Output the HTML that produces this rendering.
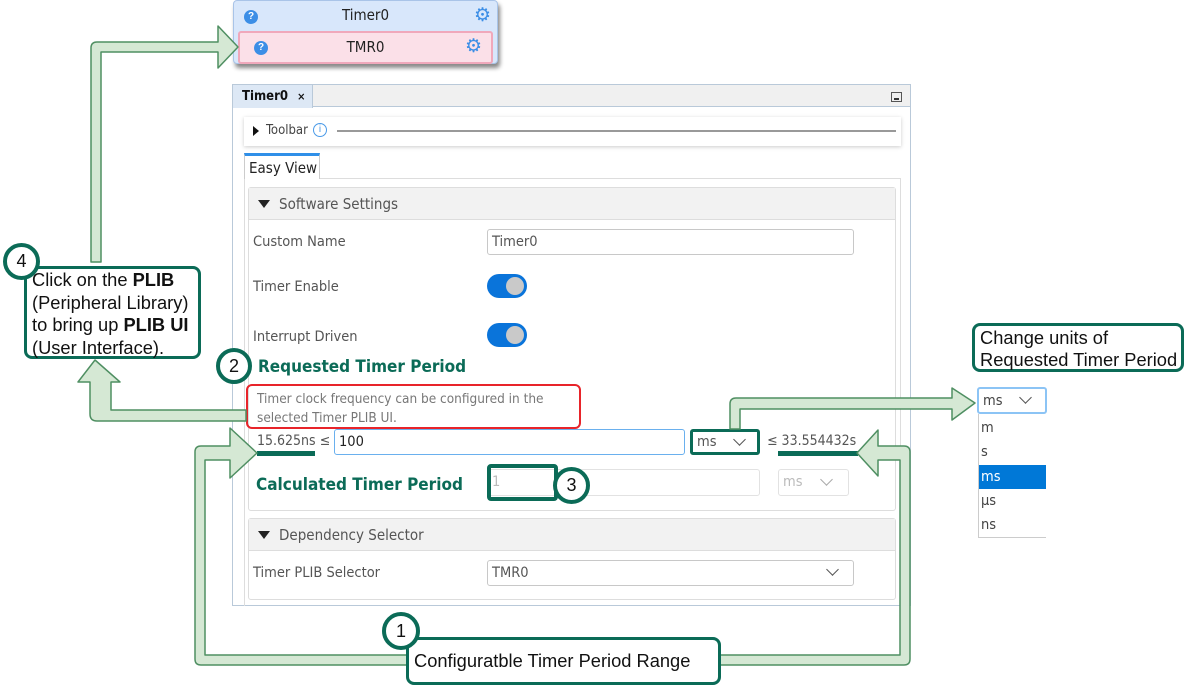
<!DOCTYPE html>
<html><head><meta charset="utf-8"><style>
*{box-sizing:border-box;margin:0;padding:0}
body{width:1184px;height:685px;background:#fff;position:relative;overflow:hidden;font-family:"Liberation Sans",sans-serif;color:#333}
.a{position:absolute}
.ui{font-family:"DejaVu Sans Condensed","Liberation Sans",sans-serif;font-size:14.5px;color:#555}
.inp{position:absolute;border:1px solid #c8c8c8;border-radius:3px;background:#fff;font-size:14.5px;padding-left:4px;line-height:24px;color:#555;font-family:"DejaVu Sans Condensed","Liberation Sans",sans-serif}
.tog{position:absolute;width:40px;height:24px;border-radius:12px;background:#0a74da}
.tog:after{content:"";position:absolute;right:3px;top:3px;width:18px;height:18px;border-radius:50%;background:#c9c9c9}
.sec{position:absolute;border:1px solid #ddd;border-radius:3px;background:#fff}
.sech{position:absolute;left:0;right:0;top:0;height:32px;background:#f2f2f2;border-bottom:1px solid #ddd;line-height:32px;padding-left:30px;font-size:15px;color:#555;font-family:"DejaVu Sans Condensed","Liberation Sans",sans-serif}
.tri{position:absolute;left:9px;top:12px;width:0;height:0;border-left:6px solid transparent;border-right:6px solid transparent;border-top:8px solid #222}
.circ{position:absolute;border:4px solid #0b6b57;border-radius:50%;background:#fff;text-align:center;font-size:18px;color:#111;font-family:"Liberation Sans",sans-serif}
.call{position:absolute;border:3px solid #0b6b57;border-radius:8px;background:#fff;font-size:18.3px;color:#111;line-height:22.5px;padding-left:5px;white-space:nowrap}
.chev{position:absolute;width:9px;height:9px;border-right:1.6px solid #555;border-bottom:1.6px solid #555;transform:rotate(45deg)}
.gt{font-family:"DejaVu Sans Condensed","Liberation Sans",sans-serif;font-weight:bold;color:#0b6b57;font-size:17px}
</style></head><body>

<!-- top card -->
<div class="a" style="left:233px;top:0;width:265px;height:64px;background:#d8e7fb;border:1px solid #a9c4e8;border-radius:4px;box-shadow:2px 4px 4px #888"></div>
<div class="a ui" style="left:233px;top:6px;width:265px;text-align:center;color:#222;font-size:15px">Timer0</div>
<div class="a" style="left:238px;top:31px;width:255px;height:33px;background:#fbe0e8;border:2px solid #f0a8bb;border-radius:3px"></div>
<div class="a ui" style="left:238px;top:38px;width:255px;text-align:center;color:#222;font-size:15px">TMR0</div>
<div class="a" style="left:244px;top:10px;width:14px;height:14px;border-radius:50%;background:#3c8ee6;color:#fff;font-size:10px;text-align:center;line-height:14px;font-weight:bold">?</div>
<div class="a" style="left:254px;top:41px;width:14px;height:14px;border-radius:50%;background:#3c8ee6;color:#fff;font-size:10px;text-align:center;line-height:14px;font-weight:bold">?</div>
<div class="a" style="left:474px;top:6px;color:#3c8ee6;font-size:19px;line-height:19px">⚙</div>
<div class="a" style="left:465px;top:37px;color:#3c8ee6;font-size:19px;line-height:19px">⚙</div>

<!-- panel -->
<div class="a" style="left:232px;top:84px;width:679px;height:522px;border:1px solid #b9c9d9;background:#fff"></div>
<div class="a" style="left:233px;top:85px;width:677px;height:22px;background:#f0f0f0;border-bottom:1px solid #b9c9d9"></div>
<div class="a" style="left:233px;top:85px;width:80px;height:23px;background:#dde8f5;border-right:1px solid #b9c9d9;font-size:13px;font-weight:bold;color:#111;padding:4px 0 0 9px;font-family:'DejaVu Sans Condensed',sans-serif">Timer0 <span style="font-size:11px;margin-left:5px">×</span></div>
<div class="a" style="left:891px;top:92px;width:11px;height:10px;border:1px solid #555;background:#eee"><div style="position:absolute;left:2px;top:5px;width:5px;height:2px;background:#333"></div></div>
<!-- toolbar -->
<div class="a" style="left:244px;top:117px;width:657px;height:29px;background:#fff;box-shadow:0 1px 4px #ccc"></div>
<div class="a" style="left:253px;top:126px;width:0;height:0;border-top:5px solid transparent;border-bottom:5px solid transparent;border-left:6px solid #111"></div>
<div class="a ui" style="left:266px;top:123px;font-size:13px;color:#444">Toolbar</div>
<div class="a" style="left:313px;top:123px;width:14px;height:14px;border:1px solid #4a9ae8;border-radius:50%;color:#4a9ae8;font-size:10px;text-align:center;line-height:12px">i</div>
<div class="a" style="left:337px;top:130px;width:559px;height:2px;background:#999"></div>
<!-- easy view -->
<div class="a" style="left:244px;top:178px;width:657px;height:428px;border:1px solid #ddd;border-bottom:none"></div>
<div class="a" style="left:244px;top:153px;width:76px;height:26px;background:#fff;border:1px solid #ccc;border-top:3px solid #2f8fe8;border-bottom:none;font-size:15px;padding:3px 0 0 4px;color:#222;font-family:'DejaVu Sans Condensed',sans-serif">Easy View</div>

<div class="sec" style="left:248px;top:187px;width:648px;height:324px"><div class="sech"><div class="tri"></div>Software Settings</div></div>
<div class="a ui" style="left:253px;top:234px">Custom Name</div>
<div class="inp" style="left:487px;top:229px;width:367px;height:26px">Timer0</div>
<div class="a ui" style="left:253px;top:279px">Timer Enable</div>
<div class="tog" style="left:487px;top:274px"></div>
<div class="a ui" style="left:253px;top:329px">Interrupt Driven</div>
<div class="tog" style="left:487px;top:323px"></div>

<div class="a gt" style="left:258px;top:357px">Requested Timer Period</div>
<div class="a" style="left:246px;top:384px;width:335px;height:45px;border:2px solid #e8242a;border-radius:6px"></div>
<div class="a ui" style="left:257px;top:390px;font-size:13.5px;color:#777;line-height:19px">Timer clock frequency can be configured in the<br>selected Timer PLIB UI.</div>
<div class="a ui" style="left:257px;top:433px;color:#555;font-size:14px">15.625ns ≤</div>
<div class="inp" style="left:334px;top:429px;width:351px;height:26px;border-color:#6ab0ee;color:#222">100</div>
<div class="inp" style="left:690px;top:429px;width:70px;height:26px;border:3px solid #0b6b57;line-height:20px">ms<div class="chev" style="left:42px;top:3px"></div></div>
<div class="a ui" style="left:767px;top:433px;font-size:14px">≤ 33.554432s</div>
<div class="a" style="left:257px;top:451px;width:58px;height:5px;background:#0b6b57"></div>
<div class="a" style="left:778px;top:451px;width:80px;height:5px;background:#0b6b57"></div>

<div class="a gt" style="left:256px;top:475px">Calculated Timer Period</div>
<div class="inp" style="left:487px;top:469px;width:273px;height:27px;border-color:#e2e2e2;color:#bbb">1</div>
<div class="inp" style="left:778px;top:469px;width:71px;height:27px;border-color:#e2e2e2;color:#bbb">ms<div class="chev" style="left:43px;top:5px;border-color:#aaa"></div></div>
<div class="a" style="left:487px;top:464px;width:71px;height:37px;border:4px solid #0b6b57;border-radius:4px"></div>

<div class="sec" style="left:248px;top:518px;width:648px;height:82px"><div class="sech"><div class="tri"></div>Dependency Selector</div></div>
<div class="a ui" style="left:253px;top:565px">Timer PLIB Selector</div>
<div class="inp" style="left:487px;top:560px;width:367px;height:26px">TMR0<div class="chev" style="left:340px;top:4px"></div></div>

<!-- arrows -->
<svg class="a" style="left:0;top:0" width="1184" height="685">
<g fill="#d5e8d4" stroke="#4f8f62" stroke-width="1.5" stroke-linejoin="round">
<path d="M91,262 V48 Q91,42 97,42 H218 V26 L238,47 L218,68 V52 H101 V262 Z"/>
<path d="M246,410 H111 V382 H120 L95,360 L78,382 H90 V414 Q90,421 97,421 H246 Z"/>
<path d="M230,446 H201 Q195,446 195,452 V659 Q195,665 201,665 H904 Q910,665 910,659 V452 Q910,446 904,446 H878 V430 L857,453 L878,476 V460 H900 V655 H205 V460 H230 V478 L257,453 L230,428 Z"/>
<path d="M730,429 V404 Q730,398 736,398 H952 V388 L975,403 L952,420 V409 H740 V429 Z"/>
</g>
</svg>

<!-- callouts -->
<div class="call" style="left:24px;top:266px;width:177px;height:93px">Click on the <b>PLIB</b><br>(Peripheral Library)<br>to bring up <b>PLIB UI</b><br>(User Interface).</div>
<div class="circ" style="left:3px;top:243px;width:37px;height:37px;line-height:29px">4</div>
<div class="circ" style="left:216px;top:348px;width:36px;height:36px;line-height:28px">2</div>
<div class="circ" style="left:553px;top:467px;width:37px;height:37px;line-height:29px">3</div>
<div class="call" style="left:406px;top:637px;width:315px;height:48px;padding:10px 0 0 5px">Configuratble Timer Period Range</div>
<div class="circ" style="left:382px;top:612px;width:38px;height:38px;line-height:30px">1</div>
<div class="call" style="left:972px;top:323px;width:212px;height:49px;line-height:22px;padding:1px 0 0 5px">Change units of<br>Requested Timer Period</div>

<!-- dropdown -->
<div class="inp" style="left:977px;top:387px;width:70px;height:27px;border:2px solid #8cc4f5;color:#444">ms<div class="chev" style="left:42px;top:4px"></div></div>
<div class="a" style="left:978px;top:414px;width:68px;height:124px;border-left:1px solid #ccc;border-bottom:1px solid #ccc"></div>
<div class="a ui" style="left:981px;top:420px;color:#444">m</div>
<div class="a ui" style="left:981px;top:444px;color:#444">s</div>
<div class="a" style="left:979px;top:465px;width:67px;height:24px;background:#0078d7"></div>
<div class="a ui" style="left:981px;top:469px;color:#fff">ms</div>
<div class="a ui" style="left:981px;top:493px;color:#444">µs</div>
<div class="a ui" style="left:981px;top:517px;color:#444">ns</div>
</body></html>
